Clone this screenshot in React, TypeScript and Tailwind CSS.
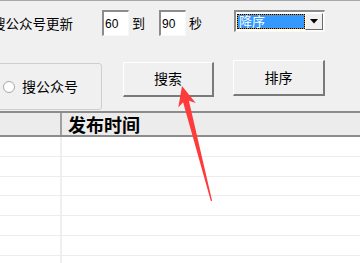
import React from 'react';

const font = "font-['Liberation_Sans','Noto_Sans_CJK_SC',sans-serif]";

function SunkenInput({ value }: { value: string }) {
  return (
    <div className="w-[27px] h-[26px] bg-white border-t-2 border-l-2 border-t-[#8c8c8c] border-l-[#8c8c8c] border-r border-b border-r-[#f8f8f8] border-b-[#f8f8f8] flex items-center pl-[1px]">
      <span className="text-[12px] leading-[14px] text-black">{value}</span>
    </div>
  );
}

function RaisedButton({ label, className }: { label: string; className: string }) {
  return (
    <div
      className={`${className} bg-[#f0f0f0] border-t border-l border-t-white border-l-white border-r-2 border-b-2 border-r-[#7a7a7a] border-b-[#7a7a7a] flex items-center justify-center`}
    >
      <span className="text-[14px] leading-[16px] text-black">{label}</span>
    </div>
  );
}

function SortSelect() {
  return (
    <div className="w-[91px] h-[22px] bg-white border-t-2 border-l-2 border-t-[#8c8c8c] border-l-[#8c8c8c] border-r border-b border-r-[#f8f8f8] border-b-[#f8f8f8] flex items-stretch p-[1px]">
      <div className="flex-1 bg-[#d0801e] my-[1px]">
        <div className="h-full bg-[#3399ff] bg-clip-padding border border-dotted border-black flex items-center pl-[1px]">
          <span className="text-[13px] leading-[14px] text-white">降序</span>
        </div>
      </div>
      <div className="w-[18px] bg-[#f0f0f0] border-t border-l border-t-white border-l-white border-r border-b border-r-[#696969] border-b-[#696969] flex items-center justify-center">
        <svg width="8" height="5" viewBox="0 0 8 5">
          <polygon points="0,0 8,0 4,4.5" fill="#000" />
        </svg>
      </div>
    </div>
  );
}

export default function App() {
  const rows = Array.from({ length: 7 });

  return (
    <div className={`relative w-[360px] h-[263px] overflow-hidden bg-[#f0f0f0] ${font}`}>
      {/* Top controls */}
      <div className="h-[111px] border-t border-t-[#a8a8a8] pt-[9px]">
        <div className="flex items-start h-[26px]">
          <span className="ml-[-8px] mt-[7px] text-[13.5px] leading-[16px] text-black whitespace-nowrap">
            搜公众号更新
          </span>
          <div className="ml-[29px]">
            <SunkenInput value="60" />
          </div>
          <span className="ml-[3px] mt-[6px] text-[13px] leading-[16px] text-black">到</span>
          <div className="ml-[14px]">
            <SunkenInput value="90" />
          </div>
          <span className="ml-[3px] mt-[6px] text-[13px] leading-[16px] text-black">秒</span>
          <div className="ml-[32px]">
            <SortSelect />
          </div>
        </div>

        <div className="flex items-start mt-[24px]">
          {/* Group box */}
          <div className="mt-[3px] ml-[-10px] w-[112px] h-[47px] border border-[#cfcfcf] rounded-[3px] flex items-center pl-[12px]">
            <div className="w-[12px] h-[12px] rounded-full border border-[#a8a8a8] bg-white" />
            <span className="ml-[7px] text-[14px] leading-[16px] text-black">搜公众号</span>
          </div>
          <RaisedButton label="搜索" className="mt-[2px] ml-[21px] w-[91px] h-[35px]" />
          <RaisedButton label="排序" className="ml-[19px] w-[92px] h-[36px]" />
        </div>
      </div>

      {/* List */}
      <div className="border-t-2 border-t-[#8c8c8c]">
        <div className="flex h-[24px] bg-[#ececec] border-b-2 border-b-[#8c8c8c]">
          <div className="w-[62px] border-r-2 border-r-[#a0a0a0]" />
          <div className="pl-[6px] pt-[3px]">
            <span className="block text-[18px] leading-[20px] font-bold text-black">发布时间</span>
          </div>
        </div>
        <div className="bg-white">
          {rows.map((_, i) => (
            <div key={i} className="flex h-[19.8px] border-b border-b-[#ececec]">
              <div className="w-[62px] border-r-2 border-r-[#efefef]" />
              <div className="flex-1" />
            </div>
          ))}
        </div>
      </div>

      {/* Red arrow */}
      <svg className="absolute left-0 top-0 pointer-events-none" width="360" height="263" viewBox="0 0 360 263">
        <polygon
          points="182,86 195.7,103.1 188.9,100.75 212.1,200.85 210.9,201.15 183.1,102.25 178.3,107.6"
          fill="#ff3a3a"
        />
      </svg>
    </div>
  );
}
